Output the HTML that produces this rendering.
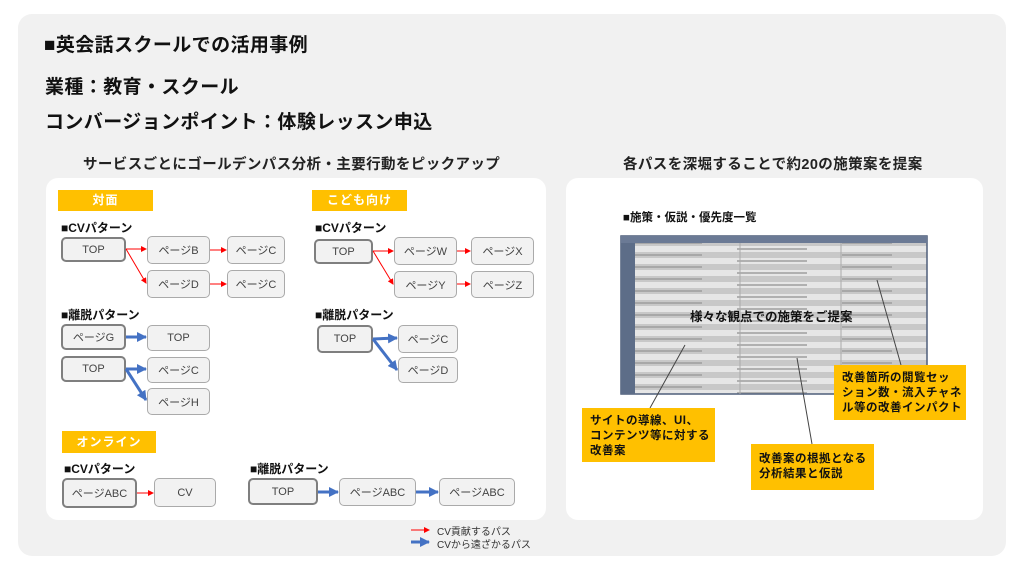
<!DOCTYPE html>
<html><head><meta charset="utf-8"><style>
*{margin:0;padding:0;box-sizing:border-box}
body{width:1024px;height:574px;background:#fff;position:relative;overflow:hidden;font-family:"Liberation Sans","Noto Sans CJK JP",sans-serif;color:#111}
.a{position:absolute;white-space:nowrap}
.panel{left:18px;top:14px;width:988px;height:542px;background:#f1f1f1;border-radius:14px}
.card{background:#fff;border-radius:12px}
.h{font-weight:bold;font-size:19px;letter-spacing:0.4px}
.st{font-size:14.5px;font-weight:bold;color:#222}
.tag{background:#ffc000;color:#fff;font-weight:bold;font-size:12px;text-align:center;letter-spacing:1px}
.lb{font-size:12px;font-weight:bold;color:#111}
.b{background:#f2f2f2;border:1.5px solid #aaa;border-radius:5px;font-size:11px;color:#444;display:flex;align-items:center;justify-content:center}
.t{border:2.5px solid #7f7f7f}
.co{background:#ffc000;font-size:11.5px;font-weight:bold;line-height:15px;padding:6px 8px;color:#111;letter-spacing:0.5px}
</style></head><body>
<div class="a panel"></div>
<div class="a h" style="left:44px;top:30px">■英会話スクールでの活用事例</div>
<div class="a h" style="left:45px;top:72px">業種：教育・スクール</div>
<div class="a h" style="left:45px;top:107px">コンバージョンポイント：体験レッスン申込</div>
<div class="a st" style="left:83px;top:153px;letter-spacing:0.4px">サービスごとにゴールデンパス分析・主要行動をピックアップ</div>
<div class="a st" style="left:623px;top:153px;letter-spacing:0.4px">各パスを深堀することで約20の施策案を提案</div>
<div class="a card" style="left:46px;top:178px;width:500px;height:342px"></div>
<div class="a card" style="left:566px;top:178px;width:417px;height:342px"></div>

<div class="a tag" style="left:58px;top:190px;width:95px;height:21px;line-height:21px">対面</div>
<div class="a tag" style="left:312px;top:190px;width:95px;height:21px;line-height:21px">こども向け</div>
<div class="a tag" style="left:62px;top:431px;width:94px;height:22px;line-height:22px">オンライン</div>

<div class="a lb" style="left:61px;top:219px">■CVパターン</div>
<div class="a lb" style="left:61px;top:306px">■離脱パターン</div>
<div class="a lb" style="left:315px;top:219px">■CVパターン</div>
<div class="a lb" style="left:315px;top:306px">■離脱パターン</div>
<div class="a lb" style="left:64px;top:460px">■CVパターン</div>
<div class="a lb" style="left:250px;top:460px">■離脱パターン</div>

<div class="a b t" style="left:61px;top:237px;width:65px;height:25px">TOP</div>
<div class="a b" style="left:147px;top:236px;width:63px;height:28px">ページB</div>
<div class="a b" style="left:227px;top:236px;width:58px;height:28px">ページC</div>
<div class="a b" style="left:147px;top:270px;width:63px;height:28px">ページD</div>
<div class="a b" style="left:227px;top:270px;width:58px;height:28px">ページC</div>
<div class="a b t" style="left:61px;top:324px;width:65px;height:26px">ページG</div>
<div class="a b" style="left:147px;top:325px;width:63px;height:26px">TOP</div>
<div class="a b t" style="left:61px;top:356px;width:65px;height:26px">TOP</div>
<div class="a b" style="left:147px;top:357px;width:63px;height:26px">ページC</div>
<div class="a b" style="left:147px;top:388px;width:63px;height:27px">ページH</div>

<div class="a b t" style="left:314px;top:239px;width:59px;height:25px">TOP</div>
<div class="a b" style="left:394px;top:237px;width:63px;height:28px">ページW</div>
<div class="a b" style="left:471px;top:237px;width:63px;height:28px">ページX</div>
<div class="a b" style="left:394px;top:271px;width:63px;height:27px">ページY</div>
<div class="a b" style="left:471px;top:271px;width:63px;height:27px">ページZ</div>
<div class="a b t" style="left:317px;top:325px;width:56px;height:28px">TOP</div>
<div class="a b" style="left:398px;top:325px;width:60px;height:28px">ページC</div>
<div class="a b" style="left:398px;top:357px;width:60px;height:26px">ページD</div>

<div class="a b t" style="left:62px;top:478px;width:75px;height:30px">ページABC</div>
<div class="a b" style="left:154px;top:478px;width:62px;height:29px">CV</div>
<div class="a b t" style="left:248px;top:478px;width:70px;height:27px">TOP</div>
<div class="a b" style="left:339px;top:478px;width:77px;height:28px">ページABC</div>
<div class="a b" style="left:439px;top:478px;width:76px;height:28px">ページABC</div>

<svg class="a" style="left:0;top:0" width="1024" height="574">
<defs>
<marker id="r" markerWidth="6" markerHeight="6" refX="5" refY="3" orient="auto" markerUnits="userSpaceOnUse"><path d="M0,0L6,3L0,6z" fill="#f00"/></marker>
<marker id="bl" markerWidth="10" markerHeight="10" refX="9" refY="5" orient="auto" markerUnits="userSpaceOnUse"><path d="M0,0L10,5L0,10z" fill="#4472c4"/></marker>
<pattern id="st" width="306" height="12" patternUnits="userSpaceOnUse"><rect width="306" height="6" fill="#c8c8c8"/><rect y="6" width="306" height="6" fill="#e6e6e6"/><rect x="10" y="2" width="80" height="2" fill="#a8a8a8"/><rect x="125" y="8" width="70" height="2" fill="#b0b0b0"/><rect x="230" y="2" width="50" height="2" fill="#a8a8a8"/></pattern>
</defs>
<g stroke="#f00" stroke-width="1" fill="none" marker-end="url(#r)">
<path d="M126,249L146,249"/><path d="M126,249L146,283"/><path d="M210,250L226,250"/><path d="M210,284L226,284"/>
<path d="M373,251L393,251"/><path d="M373,251L393,284"/><path d="M457,251L470,251"/><path d="M457,284L470,284"/>
<path d="M137,493L153,493"/>
<path d="M411,530L429,530"/>
</g>
<g stroke="#4472c4" stroke-width="3" fill="none" marker-end="url(#bl)">
<path d="M126,337L146,337"/><path d="M126,369L146,369"/><path d="M126,369L146,400"/>
<path d="M373,339L397,338"/><path d="M373,339L397,370"/>
<path d="M318,492L338,492"/><path d="M416,492L438,492"/>
<path d="M411,542L429,542"/>
</g>
<rect x="621" y="236" width="306" height="158" fill="url(#st)" stroke="#4f5f7a" stroke-width="1.5"/>
<rect x="621" y="236" width="14" height="158" fill="#5d6d88"/>
<rect x="621" y="236" width="306" height="7" fill="#6b7a95"/>
<g stroke="#aaa" stroke-width="1"><path d="M740,243V394M841,243V394"/></g>
<g stroke="#444" stroke-width="1"><path d="M685,345L650,408M797,358L812,444M877,280L901,365"/></g>
</svg>
<div class="a" style="left:437px;top:523px;font-size:10px;color:#333">CV貢献するパス</div>
<div class="a" style="left:437px;top:536px;font-size:10px;color:#333">CVから遠ざかるパス</div>

<div class="a lb" style="left:623px;top:209px;font-size:11.5px">■施策・仮説・優先度一覧</div>
<div class="a" style="left:690px;top:306px;font-size:12.5px;font-weight:bold;color:#111">様々な観点での施策をご提案</div>
<div class="a co" style="left:582px;top:408px;width:133px;height:54px">サイトの導線、UI、<br>コンテンツ等に対する<br>改善案</div>
<div class="a co" style="left:751px;top:444px;width:123px;height:46px;padding-top:8px">改善案の根拠となる<br>分析結果と仮説</div>
<div class="a co" style="left:834px;top:365px;width:132px;height:55px">改善箇所の閲覧セッ<br>ション数・流入チャネ<br>ル等の改善インパクト</div>
</body></html>
